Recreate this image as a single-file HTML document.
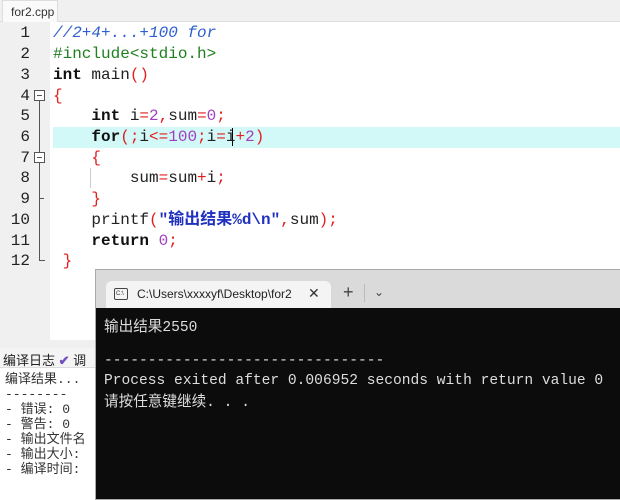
<!DOCTYPE html>
<html><head><meta charset="utf-8"><style>
*{margin:0;padding:0;box-sizing:border-box}
body{width:620px;height:500px;overflow:hidden;background:#fff;position:relative;font-family:"Liberation Mono","Noto Sans CJK SC",monospace}
.abs{position:absolute}
#tabbar{left:0;top:0;width:620px;height:22px;background:#f0f0f0;border-bottom:1px solid #ddd}
#tab{left:2px;top:0;width:56px;height:22px;background:#fafafa;border:1px solid #ddd;border-bottom:none;font:12px "Liberation Sans",sans-serif;color:#333;padding:4px 0 0 8px}
#gutter{left:0;top:22px;width:50px;height:318px;background:#f0f0f0}
.ln{position:absolute;left:0;width:30px;text-align:right;font-size:16px;color:#222;height:21px;line-height:21px}
.code{position:absolute;left:53px;font-size:16px;height:21px;line-height:21px;white-space:pre;color:#222}
.k{font-weight:bold;color:#111}.r{color:#e02020}.p{color:#a040c0}.c{color:#3060d0;font-style:italic}.g{color:#208020}.s{color:#2030c0;font-weight:bold}
#hl{left:53px;top:127px;width:567px;height:21px;background:#d2f8f8}
.fold{position:absolute;left:34px;width:11px;height:11px;border:1px solid #555;background:#fff}
.fold:after{content:"";position:absolute;left:2px;top:4px;width:5px;height:1px;background:#555}
.bl{position:absolute;left:5px;font-size:13px;color:#333;white-space:pre;line-height:15px}
#con{left:95px;top:269px;width:525px;height:231px;background:#0c0c0c;border:1px solid #aaa;border-right:none}
#tb{left:0;top:0;width:525px;height:38px;background:#dadada}
#ctab{left:10px;top:11px;width:225px;height:27px;background:#f4f4f4;border-radius:6px 6px 0 0}
.ct{position:absolute;font-size:14.6px;color:#ddd;white-space:pre;left:8px}
</style></head><body>
<div id="tabbar" class="abs"></div><div id="tab" class="abs">for2.cpp</div>
<div id="gutter" class="abs"></div>
<div class="abs" style="left:39px;top:95px;width:1px;height:166px;background:#555"></div>
<div class="abs" style="left:39px;top:260px;width:6px;height:1px;background:#555"></div>
<div class="abs" style="left:39px;top:198px;width:5px;height:1px;background:#555"></div>
<div class="fold" style="top:90px"></div><div class="fold" style="top:152px"></div>
<div id="hl" class="abs"></div>
<div class="abs" style="left:90px;top:168px;width:1px;height:20px;background:#ccc"></div>
<div class="abs" style="left:232px;top:128px;width:1px;height:18px;background:#000"></div>

<div class="ln" style="top:23px">1</div><div class="code" style="top:23px"><span class="c">//2+4+...+100 for</span></div>
<div class="ln" style="top:44px">2</div><div class="code" style="top:44px"><span class="g">#include&lt;stdio.h&gt;</span></div>
<div class="ln" style="top:65px">3</div><div class="code" style="top:65px"><span class="k">int</span> main<span class="r">()</span></div>
<div class="ln" style="top:86px">4</div><div class="code" style="top:86px"><span class="r">{</span></div>
<div class="ln" style="top:106px">5</div><div class="code" style="top:106px">    <span class="k">int</span> i<span class="r">=</span><span class="p">2</span><span class="r">,</span>sum<span class="r">=</span><span class="p">0</span><span class="r">;</span></div>
<div class="ln" style="top:127px">6</div><div class="code" style="top:127px">    <span class="k">for</span><span class="r">(;</span>i<span class="r">&lt;=</span><span class="p">100</span><span class="r">;</span>i<span class="r">=</span>i<span class="r">+</span><span class="p">2</span><span class="r">)</span></div>
<div class="ln" style="top:148px">7</div><div class="code" style="top:148px">    <span class="r">{</span></div>
<div class="ln" style="top:168px">8</div><div class="code" style="top:168px">        sum<span class="r">=</span>sum<span class="r">+</span>i<span class="r">;</span></div>
<div class="ln" style="top:189px">9</div><div class="code" style="top:189px">    <span class="r">}</span></div>
<div class="ln" style="top:210px">10</div><div class="code" style="top:210px">    printf<span class="r">(</span><span class="s">"输出结果%d\n"</span><span class="r">,</span>sum<span class="r">);</span></div>
<div class="ln" style="top:231px">11</div><div class="code" style="top:231px">    <span class="k">return</span> <span class="p">0</span><span class="r">;</span></div>
<div class="ln" style="top:251px">12</div><div class="code" style="top:251px"> <span class="r">}</span></div>

<div class="abs" style="left:0;top:340px;width:100px;height:8px;background:#f0f0f0"></div>
<div class="abs" style="left:0;top:348px;width:100px;height:20px;background:#f4f4f4;border-bottom:1px solid #ddd;font:13px 'Liberation Sans','Noto Sans CJK SC',sans-serif;color:#222;padding:2px 0 0 3px">编译日志 <span style="color:#7050c0;font-weight:bold">✔</span> 调</div>
<div class="bl" style="top:372px">编译结果...</div>
<div class="bl" style="top:387px">--------</div>
<div class="bl" style="top:402px">- 错误: 0</div>
<div class="bl" style="top:417px">- 警告: 0</div>
<div class="bl" style="top:432px">- 输出文件名</div>
<div class="bl" style="top:447px">- 输出大小:</div>
<div class="bl" style="top:462px">- 编译时间:</div>

<div id="con" class="abs">
 <div id="tb" class="abs"></div>
 <div id="ctab" class="abs"></div>
 <div class="abs" style="left:18px;top:18px;width:14px;height:12px;border:1px solid #444;border-radius:2px;font:6px sans-serif;color:#333;padding:2px 0 0 1px">C:\</div>
 <div class="abs" style="left:41px;top:17px;font:12px 'Liberation Sans',sans-serif;color:#222">C:\Users\xxxxyf\Desktop\for2</div>
 <div class="abs" style="left:212px;top:15px;font:14px 'Liberation Sans',sans-serif;color:#333">✕</div>
 <div class="abs" style="left:247px;top:12px;font:18px 'Liberation Sans',sans-serif;color:#444">+</div>
 <div class="abs" style="left:268px;top:14px;width:1px;height:18px;background:#bbb"></div>
 <div class="abs" style="left:278px;top:15px;font:12px 'Liberation Sans',sans-serif;color:#444">⌄</div>
 <div class="ct" style="top:45px">输出结果2550</div>
 <div class="ct" style="top:83px">--------------------------------</div>
 <div class="ct" style="top:103px">Process exited after 0.006952 seconds with return value 0</div>
 <div class="ct" style="top:120px">请按任意键继续. . .</div>
</div>
</body></html>
